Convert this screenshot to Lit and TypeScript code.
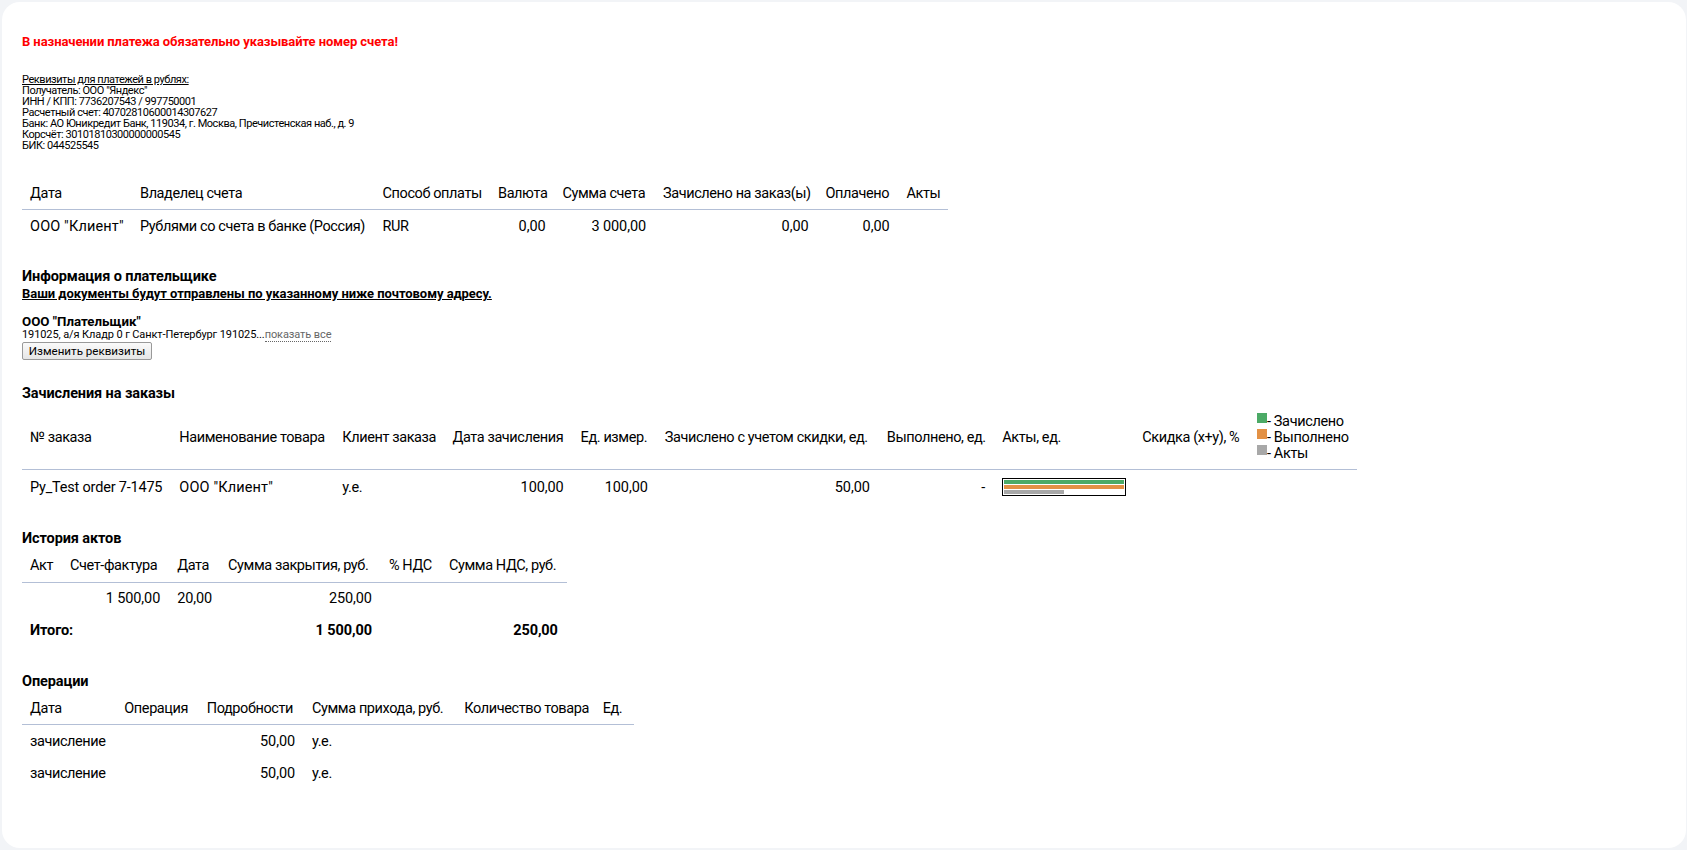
import { LitElement, html, css } from 'lit';
import { customElement } from 'lit/decorators.js';

type Cell = { text: string; kind?: 'num' | 'wide' | 'latin' };

const n = (text: string): Cell => ({ text, kind: 'num' });
const w = (text: string): Cell => ({ text, kind: 'wide' });
const t = (text: string): Cell => ({ text });
const empty = t('');

const REQUISITES = [
  'Получатель: ООО "Яндекс"',
  'ИНН / КПП: 7736207543 / 997750001',
  'Расчетный счет: 40702810600014307627',
  'Банк: АО Юникредит Банк, 119034, г. Москва, Пречистенская наб., д. 9',
  'Корсчёт: 30101810300000000545',
  'БИК: 044525545',
];

const INVOICE_COLS = [110, 242.5, 115.5, 64.5, 100.5, 162.5, 81, 49.5];
const ORDER_COLS = [149.3, 163, 110.1, 128.2, 84.2, 222, 115.5, 140, 114.7, 108];
const ACT_COLS = [40, 107.2, 50.9, 160.8, 60.1, 125.8];
const OPERATION_COLS = [94.3, 82.4, 105.3, 152.3, 138.4, 39];

const ORDER_HEAD = [
  '№ заказа',
  'Наименование товара',
  'Клиент заказа',
  'Дата зачисления',
  'Ед. измер.',
  'Зачислено с учетом скидки, ед.',
  'Выполнено, ед.',
  'Акты, ед.',
  'Скидка (x+y), %',
];

@customElement('app-root')
export class AppRoot extends LitElement {
  static styles = css`
    :host {
      display: block;
      height: 850px;
      box-sizing: border-box;
      padding: 2px 1px 2px 2px;
      background: #f2f4f7;
      font-family: Roboto, sans-serif;
      color: #000;
      overflow: hidden;
    }
    .card {
      height: 846px;
      box-sizing: border-box;
      padding: 31px 20px 0;
      background: #fff;
      border-radius: 18px;
    }
    .warning {
      font-size: 13px;
      line-height: 18px;
      font-weight: 700;
      letter-spacing: -0.08px;
      color: #f00;
    }
    .requisites {
      margin-top: 23px;
      font-size: 11px;
      line-height: 11px;
      letter-spacing: -0.45px;
    }
    .requisites u {
      display: block;
    }
    .requisites div {
      white-space: nowrap;
    }
    table {
      table-layout: fixed;
      border-collapse: collapse;
      font-size: 14.5px;
      white-space: nowrap;
    }
    th,
    td {
      padding: 0 8px;
      height: 32px;
      font-weight: 400;
      text-align: left;
      letter-spacing: -0.4px;
    }
    thead th {
      border-bottom: 1px solid #b3bfd6;
    }
    td.num {
      padding-right: 9px;
      text-align: right;
      letter-spacing: -0.1px;
    }
    td.wide {
      letter-spacing: 0.15px;
    }
    td.latin {
      letter-spacing: -0.2px;
    }
    tr.total td {
      font-weight: 700;
      letter-spacing: -0.1px;
    }
    h3 {
      margin: 0;
      font-size: 14.5px;
      line-height: 18px;
      font-weight: 700;
      letter-spacing: -0.1px;
    }
    .first-table {
      margin-top: 26px;
    }
    .payer {
      margin-top: 26px;
    }
    .notice {
      font-size: 13px;
      line-height: 16px;
      font-weight: 700;
      letter-spacing: -0.05px;
      text-decoration: underline;
    }
    .payer-name {
      margin-top: 12px;
      font-size: 13.3px;
      line-height: 15px;
      font-weight: 700;
    }
    .address {
      font-size: 11px;
      line-height: 12px;
      letter-spacing: -0.1px;
    }
    .address span {
      color: #666;
      border-bottom: 1px dotted #666;
    }
    button {
      display: block;
      margin-top: 1px;
      width: 130px;
      height: 18px;
      padding: 0;
      font: 11.6px Roboto, sans-serif;
      color: #000;
      background: linear-gradient(#fafafa, #e6e6e6);
      border: 1px solid #999;
      border-radius: 2px;
    }
    .orders {
      margin-top: 25px;
    }
    .orders-table {
      margin-top: 2px;
    }
    .orders-table thead th {
      height: 64px;
    }
    .orders-table td {
      height: 34px;
    }
    .legend {
      font-size: 14.5px;
      line-height: 18px;
      letter-spacing: -0.35px;
    }
    .legend div {
      display: flex;
      height: 16px;
    }
    .swatch {
      flex: none;
      width: 10px;
      height: 10px;
    }
    .green {
      background: #4caa66;
    }
    .orange {
      background: #e39145;
    }
    .gray {
      background: #a8a8a8;
    }
    .bars {
      display: grid;
      gap: 1px;
      box-sizing: border-box;
      padding: 1px;
      border: 1px solid #000;
      width: 124px;
    }
    .bars i {
      display: block;
      height: 4px;
    }
    .bars i.half {
      width: 50%;
    }
    .acts,
    .operations {
      margin-top: 26px;
    }
    .acts thead th,
    .operations thead th {
      height: 34px;
      padding-top: 2px;
      box-sizing: border-box;
    }
  `;

  private renderCell(c: Cell) {
    return html`<td class=${c.kind ?? ''}>${c.text}</td>`;
  }

  private renderCols(widths: number[]) {
    const total = widths.reduce((sum, v) => sum + v, 0);
    return {
      style: `width: ${total}px`,
      cols: html`<colgroup>${widths.map((v) => html`<col style="width: ${v}px" />`)}</colgroup>`,
    };
  }

  private renderTable(widths: number[], head: string[], rows: Cell[][], total?: Cell[]) {
    const { style, cols } = this.renderCols(widths);
    return html`
      <table style=${style}>
        ${cols}
        <thead>
          <tr>${head.map((h) => html`<th>${h}</th>`)}</tr>
        </thead>
        <tbody>
          ${rows.map((row) => html`<tr>${row.map((c) => this.renderCell(c))}</tr>`)}
          ${total ? html`<tr class="total">${total.map((c) => this.renderCell(c))}</tr>` : ''}
        </tbody>
      </table>
    `;
  }

  private renderOrders() {
    const { style, cols } = this.renderCols(ORDER_COLS);
    const cells: Cell[] = [
      { text: 'Py_Test order 7-1475', kind: 'latin' },
      w('ООО "Клиент"'),
      t('у.е.'),
      n('100,00'),
      n('100,00'),
      n('50,00'),
      n('-'),
    ];
    return html`
      <table style=${style}>
        ${cols}
        <thead>
          <tr>
            ${ORDER_HEAD.map((h) => html`<th>${h}</th>`)}
            <th>
              <div class="legend">
                <div><span class="swatch green"></span>- Зачислено</div>
                <div><span class="swatch orange"></span>- Выполнено</div>
                <div><span class="swatch gray"></span>- Акты</div>
              </div>
            </th>
          </tr>
        </thead>
        <tbody>
          <tr>
            ${cells.map((c) => this.renderCell(c))}
            <td>
              <div class="bars">
                <i class="green"></i>
                <i class="orange"></i>
                <i class="gray half"></i>
              </div>
            </td>
            <td></td>
            <td></td>
          </tr>
        </tbody>
      </table>
    `;
  }

  render() {
    return html`
      <div class="card">
        <div class="warning">В назначении платежа обязательно указывайте номер счета!</div>
        <div class="requisites">
          <u>Реквизиты для платежей в рублях:</u>
          ${REQUISITES.map((line) => html`<div>${line}</div>`)}
        </div>

        <div class="first-table">
          ${this.renderTable(
            INVOICE_COLS,
            ['Дата', 'Владелец счета', 'Способ оплаты', 'Валюта', 'Сумма счета', 'Зачислено на заказ(ы)', 'Оплачено', 'Акты'],
            [[w('ООО "Клиент"'), t('Рублями со счета в банке (Россия)'), t('RUR'), n('0,00'), n('3 000,00'), n('0,00'), n('0,00'), empty]]
          )}
        </div>

        <div class="payer">
          <h3>Информация о плательщике</h3>
          <div class="notice">Ваши документы будут отправлены по указанному ниже почтовому адресу.</div>
          <div class="payer-name">ООО "Плательщик"</div>
          <div class="address">191025, а/я Кладр 0 г Санкт-Петербург 191025...<span>показать все</span></div>
          <button>Изменить реквизиты</button>
        </div>

        <div class="orders">
          <h3>Зачисления на заказы</h3>
          <div class="orders-table">${this.renderOrders()}</div>
        </div>

        <div class="acts">
          <h3>История актов</h3>
          ${this.renderTable(
            ACT_COLS,
            ['Акт', 'Счет-фактура', 'Дата', 'Сумма закрытия, руб.', '% НДС', 'Сумма НДС, руб.'],
            [[empty, n('1 500,00'), n('20,00'), n('250,00'), empty, empty]],
            [t('Итого:'), empty, empty, n('1 500,00'), empty, n('250,00')]
          )}
        </div>

        <div class="operations">
          <h3>Операции</h3>
          ${this.renderTable(
            OPERATION_COLS,
            ['Дата', 'Операция', 'Подробности', 'Сумма прихода, руб.', 'Количество товара', 'Ед.'],
            [
              [t('зачисление'), empty, n('50,00'), t('у.е.'), empty, empty],
              [t('зачисление'), empty, n('50,00'), t('у.е.'), empty, empty],
            ]
          )}
        </div>
      </div>
    `;
  }
}
